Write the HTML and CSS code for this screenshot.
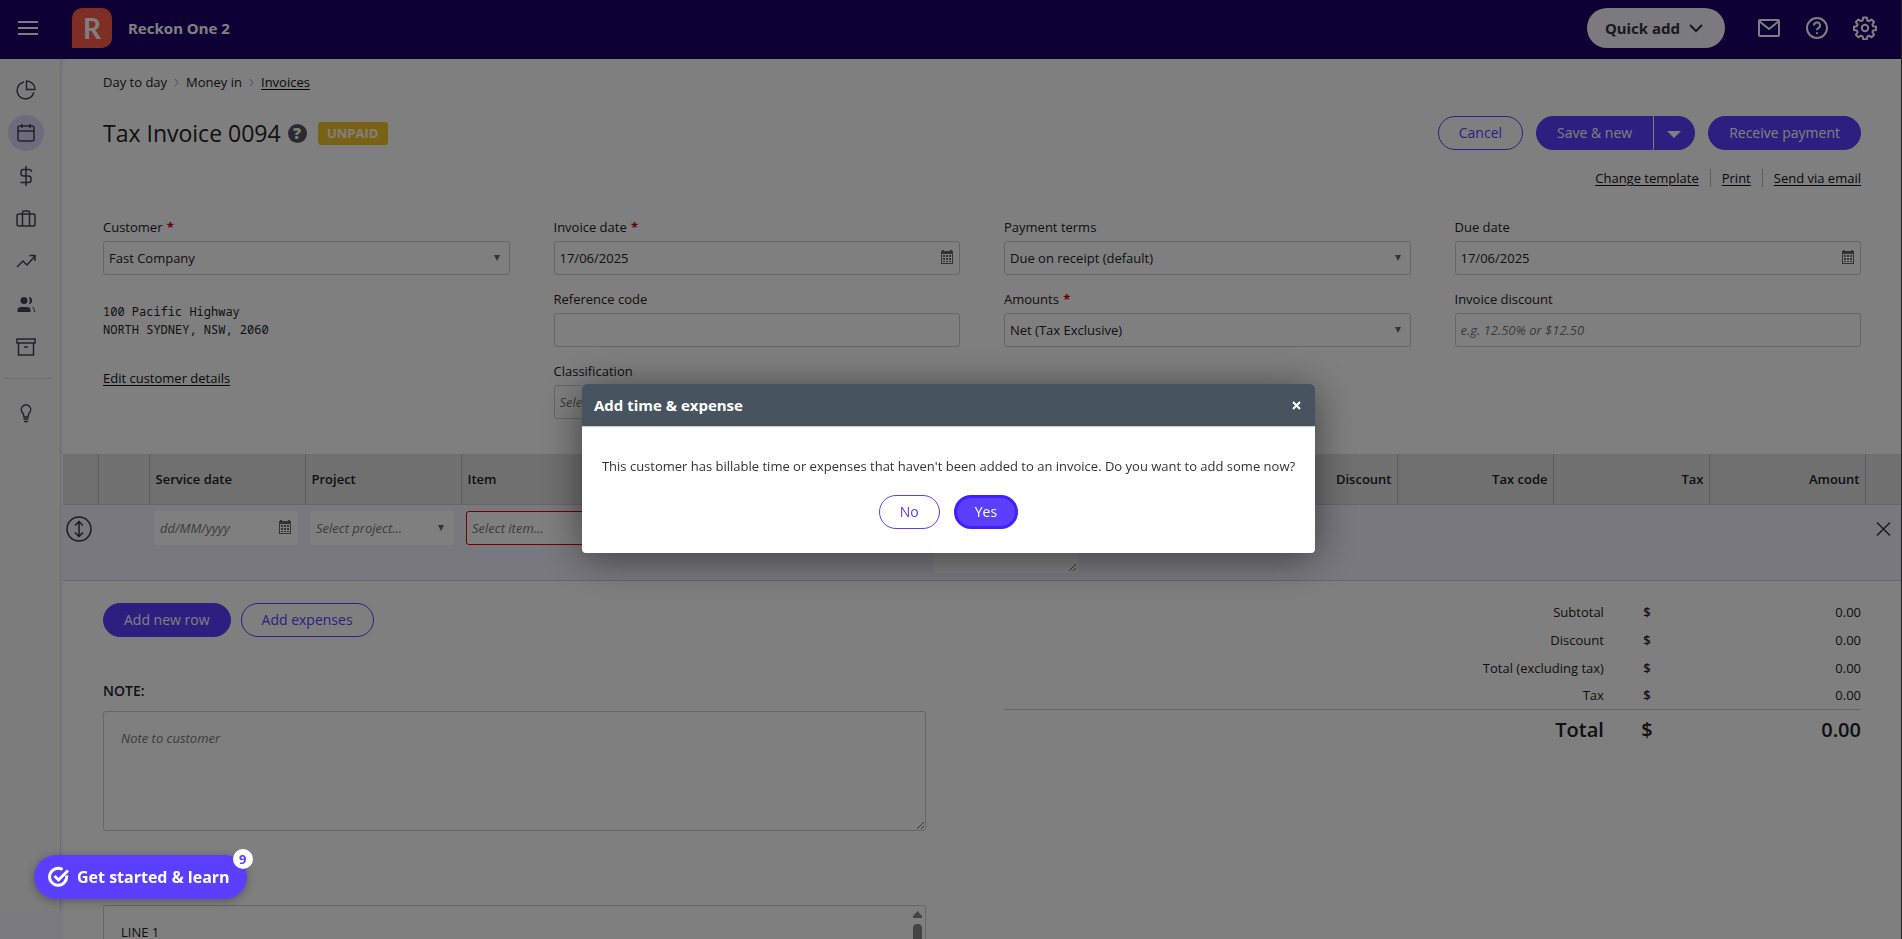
FILE: index.html
```html
<!DOCTYPE html>
<html lang="en">
<head>
  <meta charset="UTF-8" />
  <title>Tax Invoice 0094</title>
  <link rel="stylesheet" href="styles.css">
</head>
<body>

  <svg class="sprite">
    <symbol id="calendar" viewBox="0 0 12 14">
      <path d="M0 1h12v13H0z M1 4v9h10V4z" fill-rule="evenodd" />
      <path d="M2 5h2v2H2z M5 5h2v2H5z M8 5h2v2H8z M2 8h2v2H2z M5 8h2v2H5z M8 8h2v2H8z M2 11h2v1H2z M5 11h2v1H5z M8 11h2v1H8z M1 0h2v1H1z M9 0h2v1H9z" />
    </symbol>
  </svg>

  <!-- Top bar -->
  <header class="topbar">
    <button class="icon-btn menu-btn" aria-label="Menu">
      <svg width="20" height="14" viewBox="0 0 20 14"><path d="M0 1h20M0 7h20M0 13h20" /></svg>
    </button>
    <span class="logo">R</span>
    <span class="brand">Reckon One 2</span>
    <div class="topbar-right">
      <button class="quick-add">Quick add
        <svg width="14" height="9" viewBox="0 0 14 9"><path d="M1 1l6 6 6-6" /></svg>
      </button>
      <button class="icon-btn" aria-label="Messages">
        <svg width="24" height="24" viewBox="0 0 24 24"><rect x="2" y="4" width="20" height="16" rx="1" /><path d="M2 5l10 8 10-8" /></svg>
      </button>
      <button class="icon-btn" aria-label="Help">
        <svg width="24" height="24" viewBox="0 0 24 24"><circle cx="12" cy="12" r="10" /><path d="M9 9.500a3 3 0 1 1 4.300 2.600Q12 12.800 12 14.300M12 16.200v1.800" /></svg>
      </button>
      <button class="icon-btn" aria-label="Settings">
        <svg width="24" height="24" viewBox="0 0 24 24"><circle cx="12" cy="12" r="3.200" /><path d="M10.200 1.500h3.600l.6 3 1.600.7 2.600-1.700 2.500 2.500-1.700 2.600.7 1.600 3 .6v3.200l-3 .6-.7 1.600 1.700 2.600-2.500 2.500-2.600-1.700-1.600.7-.6 3h-3.600l-.6-3-1.600-.7-2.600 1.700-2.500-2.500 1.700-2.600-.7-1.600-3-.6v-3.200l3-.6.7-1.600-1.700-2.600 2.500-2.500 2.600 1.700 1.600-.7z" /></svg>
      </button>
    </div>
  </header>

  <div class="layout">
    <!-- Side menu -->
    <nav class="sidebar">
      <a href="#" class="side-link" aria-label="Dashboard">
        <svg width="20" height="20" viewBox="0 0 20 20"><path d="M8 2A8.500 8.500 0 1 0 17.800 12.500" /><path d="M10.500 1v8.500H19A8.500 8.500 0 0 0 10.500 1z" /></svg>
      </a>
      <a href="#" class="side-link active" aria-label="Day to day">
        <svg width="20" height="20" viewBox="0 0 20 20"><rect x="2" y="3" width="16" height="15" rx="2" /><path d="M2 8h16M6 1v4M14 1v4" /></svg>
      </a>
      <a href="#" class="side-link" aria-label="Money">
        <svg width="20" height="20" viewBox="0 0 20 20"><path d="M10 0v20M15.500 6V5.500A2.500 2.500 0 0 0 13 3.500H7.500A2.500 2.500 0 0 0 5 6v1.500A2.500 2.500 0 0 0 7.500 10h5A2.500 2.500 0 0 1 15 12.500V14a2.500 2.500 0 0 1-2.500 2.500H4.500" /></svg>
      </a>
      <a href="#" class="side-link" aria-label="Business">
        <svg width="20" height="20" viewBox="0 0 20 20"><rect x="1" y="5" width="18" height="12" rx="2" /><path d="M6.500 17V3.500A1.500 1.500 0 0 1 8 2h4a1.500 1.500 0 0 1 1.500 1.500V17" /></svg>
      </a>
      <a href="#" class="side-link" aria-label="Reports">
        <svg width="20" height="20" viewBox="0 0 20 20"><path d="M1 15l6-6 4 4 8-9M13.500 3.500H19V9" /></svg>
      </a>
      <a href="#" class="side-link" aria-label="Contacts">
        <svg class="solid" width="20" height="20" viewBox="0 0 20 20"><circle cx="8" cy="5.500" r="3.500" /><path d="M1.500 17v-2q0-3 4-3h5q4 0 4 3v2z M13 2q3 0 3 3.500T13 9q1.500-3.500 0-7z M15.500 11.500q3.500 1 3.500 5.500h-1q0-3.500-2.500-5.500z" /></svg>
      </a>
      <a href="#" class="side-link" aria-label="Items">
        <svg width="20" height="20" viewBox="0 0 20 20"><path d="M1 1h18v4H1zM2.500 5v12h15V5M8 9h4" /></svg>
      </a>
      <hr>
      <a href="#" class="side-link" aria-label="Tips">
        <svg width="20" height="20" viewBox="0 0 20 20"><path d="M8 14q0-2.500-1.500-4.300A4.700 4.700 0 1 1 13.500 9.700Q12 11.500 12 14zM7.500 16h5M8 18.500h4" /></svg>
      </a>
    </nav>

    <main class="content">
      <div class="section">
        <nav class="breadcrumbs">
          <span>Day to day</span>
          <svg width="5" height="9" viewBox="0 0 5 9"><path d="M1 1l3 3.500L1 8" /></svg>
          <span>Money in</span>
          <svg width="5" height="9" viewBox="0 0 5 9"><path d="M1 1l3 3.500L1 8" /></svg>
          <a href="#">Invoices</a>
        </nav>

        <div class="title-row">
          <h1>Tax Invoice 0094</h1>
          <span class="help">?</span>
          <span class="status">UNPAID</span>
          <div class="actions">
            <button class="btn outline">Cancel</button>
            <div class="split">
              <button class="btn">Save &amp; new</button>
              <button class="btn drop" aria-label="More save options"><svg width="14" height="7" viewBox="0 0 14 7"><path d="M0 0h14L7 7z" /></svg></button>
            </div>
            <button class="btn">Receive payment</button>
          </div>
        </div>

        <div class="links">
          <a href="#">Change template</a>
          <a href="#">Print</a>
          <a href="#">Send via email</a>
        </div>

        <!-- Invoice details -->
        <form class="details">
          <div class="column">
            <div class="field">
              <label for="customer">Customer <b>*</b></label>
              <div class="select"><select id="customer"><option>Fast Company</option></select></div>
            </div>
            <address>100 Pacific Highway<br>NORTH SYDNEY, NSW, 2060</address>
            <a href="#">Edit customer details</a>
          </div>
          <div class="column">
            <div class="field">
              <label for="invoice-date">Invoice date <b>*</b></label>
              <div class="date"><input id="invoice-date" type="text" value="17/06/2025"><svg width="12" height="14"><use href="#calendar" /></svg></div>
            </div>
            <div class="field">
              <label for="reference">Reference code</label>
              <input id="reference" type="text">
            </div>
            <div class="field">
              <label for="classification">Classification</label>
              <div class="select"><select id="classification" class="empty"><option>Select classification...</option></select></div>
            </div>
          </div>
          <div class="column">
            <div class="field">
              <label for="terms">Payment terms</label>
              <div class="select"><select id="terms"><option>Due on receipt (default)</option></select></div>
            </div>
            <div class="field">
              <label for="amounts">Amounts <b>*</b></label>
              <div class="select"><select id="amounts"><option>Net (Tax Exclusive)</option></select></div>
            </div>
          </div>
          <div class="column">
            <div class="field">
              <label for="due-date">Due date</label>
              <div class="date"><input id="due-date" type="text" value="17/06/2025"><svg width="12" height="14"><use href="#calendar" /></svg></div>
            </div>
            <div class="field">
              <label for="discount">Invoice discount</label>
              <input id="discount" type="text" placeholder="e.g. 12.50% or $12.50">
            </div>
          </div>
        </form>
      </div>

      <!-- Invoice lines -->
      <table class="lines">
        <thead>
          <tr>
            <th class="col-move"></th>
            <th class="col-check"></th>
            <th>Service date</th>
            <th>Project</th>
            <th>Item</th>
            <th></th>
            <th></th>
            <th></th>
            <th></th>
            <th class="num">Discount</th>
            <th class="num">Tax code</th>
            <th class="num">Tax</th>
            <th class="num">Amount</th>
            <th class="col-delete"></th>
          </tr>
        </thead>
        <tbody>
          <tr>
            <td class="tool">
              <button class="row-btn" aria-label="Move row"><svg width="26" height="26" viewBox="0 0 26 26"><circle cx="13" cy="13" r="12" /><path d="M13 5.500v15M9 9.500l4-4 4 4M9 16.500l4 4 4-4" /></svg></button>
            </td>
            <td></td>
            <td><div class="date"><input type="text" placeholder="dd/MM/yyyy" aria-label="Service date"><svg width="12" height="14"><use href="#calendar" /></svg></div></td>
            <td><div class="select"><select class="empty" aria-label="Project"><option>Select project...</option></select></div></td>
            <td><div class="select"><select class="empty invalid" aria-label="Item"><option>Select item...</option></select></div></td>
            <td></td>
            <td></td>
            <td><textarea aria-label="Description"></textarea></td>
            <td></td>
            <td></td>
            <td></td>
            <td></td>
            <td></td>
            <td class="tool">
              <button class="row-btn" aria-label="Delete row"><svg width="30" height="26" viewBox="0 0 30 26"><path d="M9 6.500l13 13M22 6.500l-13 13" /></svg></button>
            </td>
          </tr>
        </tbody>
      </table>

      <div class="footer">
        <div class="notes">
          <div class="row-actions">
            <button class="btn">Add new row</button>
            <button class="btn outline">Add expenses</button>
          </div>
          <label class="note-label" for="note">NOTE:</label>
          <textarea id="note" class="note" placeholder="Note to customer"></textarea>
          <div class="terms-box">
            <textarea class="note" aria-label="Terms">LINE 1</textarea>
            <svg width="9" height="60" viewBox="0 0 9 60"><path d="M4.500 0L9 5v2H0V5z" /><rect y="13" width="9" height="60" rx="4" /></svg>
          </div>
        </div>

        <table class="totals">
          <tbody>
            <tr><th>Subtotal</th><td class="currency">$</td><td>0.00</td></tr>
            <tr><th>Discount</th><td class="currency">$</td><td>0.00</td></tr>
            <tr><th>Total (excluding tax)</th><td class="currency">$</td><td>0.00</td></tr>
            <tr><th>Tax</th><td class="currency">$</td><td>0.00</td></tr>
          </tbody>
          <tfoot>
            <tr><th>Total</th><td class="currency">$</td><td>0.00</td></tr>
          </tfoot>
        </table>
      </div>
    </main>
  </div>

  <!-- Dialog -->
  <div class="overlay">
    <div class="dialog" role="dialog" aria-labelledby="dialog-title">
      <div class="dialog-header">
        <h2 id="dialog-title">Add time &amp; expense</h2>
        <button class="close" aria-label="Close"><svg width="9" height="9" viewBox="0 0 9 9"><path d="M1 1l7 7M8 1l-7 7" /></svg></button>
      </div>
      <div class="dialog-body">
        <p>This customer has billable time or expenses that haven't been added to an invoice. Do you want to add some now?</p>
        <div class="dialog-actions">
          <button class="btn outline">No</button>
          <button class="btn focused">Yes</button>
        </div>
      </div>
    </div>
  </div>

  <button class="get-started">
    <svg width="22" height="22" viewBox="0 0 22 22"><path d="M18.500 9.500A8.500 8.500 0 1 1 14.500 3.500" /><path d="M6.500 10l4 4L20 4.500" /></svg>
    Get started &amp; learn
    <span class="count">9</span>
  </button>

</body>
</html>
```

FILE: styles.css
```css
* {
  box-sizing: border-box;
}

body {
  margin: 0;
  height: 100vh;
  overflow: hidden;
  display: flex;
  flex-direction: column;
  border-right: 1px solid #444;
  font-family: "Open Sans", "Noto Sans", sans-serif;
  font-size: 13px;
  line-height: 18px;
  color: #222;
  background-color: #f5f3ff;
}

button, input, select, textarea {
  font: inherit;
  color: inherit;
}

button {
  padding: 0;
  border: none;
  background: none;
  cursor: pointer;
}

a {
  color: #111;
  text-underline-offset: 2px;
  text-decoration-thickness: 1px;
}

svg {
  flex-shrink: 0;
  fill: none;
  stroke: currentColor;
}

.sprite {
  display: none;
}

/* Top bar */
.topbar {
  flex-shrink: 0;
  display: flex;
  align-items: center;
  height: 59px;
  padding: 0 24px 3px 18px;
  background-color: #1a006a;
  color: #fff;
}

.icon-btn {
  display: flex;
  color: #fff;
}

.icon-btn svg {
  stroke-width: 2;
  stroke-linejoin: round;
}

.logo {
  width: 40px;
  height: 40px;
  margin-left: 34px;
  border-radius: 10px 10px 10px 0;
  background-color: #ff5a4b;
  font-family: Lato, sans-serif;
  font-size: 28px;
  font-weight: bold;
  line-height: 40px;
  text-align: center;
}

.brand {
  margin-left: 16px;
  font-family: "Noto Sans", sans-serif;
  font-size: 15px;
  font-weight: bold;
}

.topbar-right {
  display: flex;
  align-items: center;
  gap: 24px;
  margin-left: auto;
}

.quick-add {
  display: flex;
  align-items: center;
  gap: 9px;
  height: 40px;
  margin-right: 8px;
  padding: 0 22px 0 18px;
  border-radius: 20px;
  background-color: #f7f5ff;
  color: #333340;
  font-family: "Noto Sans", sans-serif;
  font-size: 15px;
  font-weight: bold;
}

.quick-add svg {
  stroke-width: 2;
}

/* Side menu */
.layout {
  flex: 1;
  display: flex;
  min-height: 0;
}

.sidebar {
  flex-shrink: 0;
  display: flex;
  flex-direction: column;
  gap: 7px;
  width: 61px;
  margin-bottom: 28px;
  padding: 13px 8px;
  border-right: 1px solid #ddd9f0;
  background-color: #f9f9f9;
}

.side-link {
  display: flex;
  align-items: center;
  justify-content: center;
  width: 36px;
  height: 36px;
  border-radius: 50%;
  color: #444450;
}

.side-link svg {
  stroke-width: 1.5;
}

.side-link .solid {
  fill: currentColor;
  stroke: none;
}

.side-link.active {
  background-color: #dcd6fa;
}

.sidebar hr {
  width: 48px;
  margin: 5px 0 9px -4px;
  border: none;
  border-top: 1px solid #ddd;
}

/* Main content */
.content {
  flex: 1;
  min-width: 0;
  margin-left: 2px;
  overflow: hidden;
  border-top-left-radius: 8px;
  background-color: #fff;
}

.section {
  padding: 14px 40px 35px;
}

.breadcrumbs {
  display: flex;
  align-items: center;
  gap: 7px;
}

.breadcrumbs svg {
  stroke: #999;
}

.title-row {
  display: flex;
  align-items: center;
  margin-top: 25px;
}

h1 {
  margin: 0;
  font-size: 23px;
  font-weight: normal;
  line-height: 34px;
}

.help {
  width: 19px;
  height: 19px;
  margin: 0 11px 0 7px;
  border-radius: 50%;
  background-color: #555560;
  color: #fff;
  font-size: 16px;
  font-weight: 800;
  line-height: 19px;
  text-align: center;
}

.status {
  width: 70px;
  border-radius: 3px;
  background-color: #f5c52b;
  color: #fff;
  font-weight: bold;
  line-height: 23px;
  text-align: center;
}

.actions {
  display: flex;
  gap: 13px;
  margin-left: auto;
}

.btn {
  height: 34px;
  padding: 0 20px;
  border: 1px solid #5a3fff;
  border-radius: 17px;
  background-color: #5a3fff;
  color: #fff;
  font-size: 14px;
}

.btn.outline {
  background-color: #fff;
  color: #5a3fff;
}

.btn.focused {
  border: 3px solid #411fff;
  padding: 0 18px;
}

.split {
  display: flex;
}

.split .btn:first-child {
  border-radius: 17px 0 0 17px;
}

.split .drop {
  display: flex;
  align-items: center;
  width: 42px;
  padding: 2px 0 0 13px;
  border-left: 1px solid #fff;
  border-radius: 0 17px 17px 0;
}

.drop svg {
  fill: #fff;
  stroke: none;
}

.links {
  display: flex;
  justify-content: flex-end;
  margin-top: 19px;
}

.links a + a {
  margin-left: 11px;
  padding-left: 11px;
  border-left: 1px solid #bbb;
}

/* Invoice details */
.details {
  display: grid;
  grid-template-columns: repeat(4, 1fr);
  gap: 44px;
  margin-top: 31px;
}

.field {
  margin-bottom: 15px;
}

.column:nth-child(2) .field:last-child {
  margin-bottom: 0;
}

.field label {
  display: block;
  margin-bottom: 5px;
}

.field label b {
  margin-left: 1px;
  color: #c00;
}

input, select, textarea {
  display: block;
  width: 100%;
  height: 34px;
  padding: 0 5px;
  border: 1px solid #ccc;
  border-radius: 3px;
  background-color: #fff;
  outline: none;
  appearance: none;
}

::placeholder, .empty {
  color: #777;
  font-style: italic;
  opacity: 1;
}

.select, .date {
  position: relative;
}

.select::after {
  content: "";
  position: absolute;
  right: 10px;
  top: 14px;
  border: 3px solid transparent;
  border-top: 6px solid #666;
  border-bottom: none;
}

.date svg {
  position: absolute;
  right: 7px;
  top: 9px;
  fill: #666;
  stroke: none;
}

address {
  margin: 28px 0 30px;
  font-family: "Noto Sans Mono", "DejaVu Sans Mono", monospace;
  font-size: 12px;
  font-style: normal;
}

/* Invoice lines */
.lines {
  width: 100%;
  border-collapse: collapse;
  table-layout: fixed;
}

.lines th {
  height: 50px;
  padding: 0 5px 0 6px;
  border-right: 1px solid #bbb;
  border-bottom: 1px solid #ccc;
  background-color: #e0e0e0;
  font-weight: 600;
  text-align: left;
}

.lines th:last-child {
  border-right: none;
}

.lines .num {
  text-align: right;
}

.lines .col-move {
  width: 35px;
}

.lines .col-delete {
  width: 36px;
}

.lines .col-check {
  width: 51px;
}

.lines td {
  height: 76px;
  padding: 6px 7px 6px 5px;
  border-bottom: 1px solid #ccc;
  background-color: #f3f1fd;
  vertical-align: top;
}

.lines input, .lines select, .lines textarea {
  border-color: #fff;
}

.lines .invalid {
  border-color: #e00000;
}

.lines textarea {
  height: 62px;
}

.lines .tool {
  padding: 11px 3px;
}

.row-btn {
  display: block;
  color: #333340;
}

.row-btn svg {
  display: block;
  stroke-width: 1.5;
}

/* Notes and totals */
.footer {
  display: flex;
  justify-content: space-between;
  align-items: flex-start;
  padding: 22px 40px 0;
}

.notes {
  width: 823px;
}

.row-actions {
  display: flex;
  gap: 10px;
}

.note-label {
  display: block;
  margin: 45px 0 11px;
  font-size: 14px;
  font-weight: 600;
}

.note {
  height: 120px;
  padding: 17px;
}

.terms-box {
  position: relative;
  margin-top: 74px;
}

.terms-box svg {
  position: absolute;
  right: 4px;
  top: 6px;
  fill: #888;
  stroke: none;
}

.totals {
  width: 857px;
  margin-top: -5px;
  border-collapse: collapse;
}

.totals th, .totals td {
  height: 28px;
  padding: 0;
  font-weight: normal;
  text-align: right;
}

.totals th {
  width: 70%;
}

.totals .currency {
  width: 86px;
  font-weight: 600;
  text-align: center;
}

.totals tfoot tr {
  border-top: 1px solid #ccc;
}

.totals tfoot th, .totals tfoot td {
  height: 40px;
  font-size: 20px;
  font-weight: 600;
}

/* Dialog */
.overlay {
  position: fixed;
  inset: 0;
  display: flex;
  align-items: center;
  justify-content: center;
  padding: 0 5px 2px 0;
  background-color: rgba(0, 0, 0, 0.5);
}

.dialog {
  overflow: hidden;
  border-radius: 4px;
  background-color: #fff;
  box-shadow: 0 5px 40px rgba(0, 0, 0, 0.5);
}

.dialog-header {
  display: flex;
  align-items: center;
  justify-content: space-between;
  height: 43px;
  padding: 0 14px 0 12px;
  border-bottom: 1px solid #ccc;
  background-color: #47535f;
  color: #fff;
}

h2 {
  margin: 0;
  font-size: 15px;
  font-weight: bold;
}

.close svg {
  stroke-width: 2;
}

.dialog-body {
  padding: 30px 20px 24px;
}

.dialog-body p {
  margin: 0 0 20px;
  color: #333;
}

.dialog-actions {
  display: flex;
  justify-content: center;
  gap: 14px;
}

.get-started {
  position: fixed;
  left: 34px;
  bottom: 40px;
  display: flex;
  align-items: center;
  gap: 7px;
  height: 44px;
  padding: 0 17px 0 14px;
  border-radius: 22px;
  background-color: #5a3fff;
  box-shadow: 0 2px 10px rgba(0, 0, 0, 0.3);
  color: #fff;
  font-size: 16px;
  font-weight: bold;
}

.get-started svg {
  stroke-width: 3;
}

.count {
  position: absolute;
  right: -6px;
  top: -6px;
  width: 20px;
  height: 20px;
  border-radius: 50%;
  background-color: #fff;
  color: #5a3fff;
  font-size: 13px;
  line-height: 20px;
}
```
